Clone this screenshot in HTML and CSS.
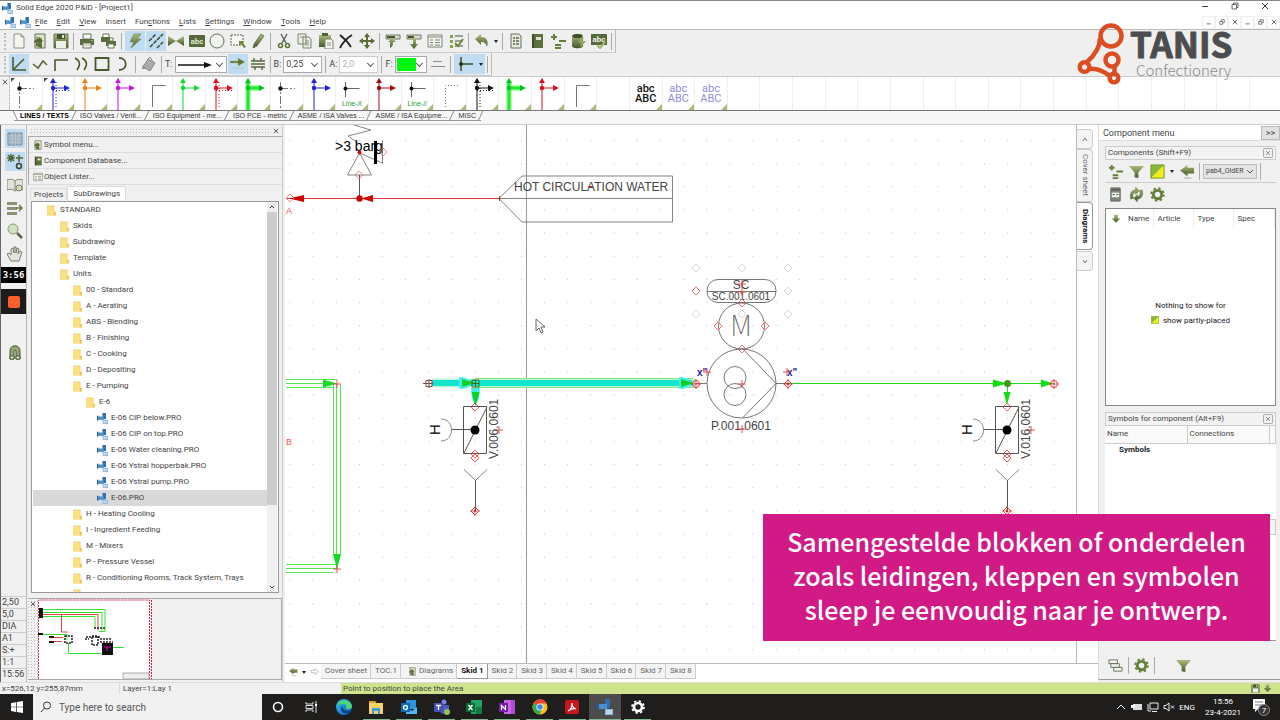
FILE: index.html
```html
<!DOCTYPE html>
<html lang="en">
<head>
<meta charset="utf-8">
<title>Solid Edge 2020 P&amp;ID - [Project1]</title>
<link rel="stylesheet" href="styles.css">
</head>
<body>
<svg class="defs" aria-hidden="true">
  <defs>
    <linearGradient id="olive" x1="0" y1="0" x2="0" y2="1"><stop offset="0" stop-color="#a9bd7c"/><stop offset="1" stop-color="#46582a"/></linearGradient>
    <linearGradient id="edgeg" x1="0" y1="0" x2="1" y2="1"><stop offset="0" stop-color="#35c6ee"/><stop offset="1" stop-color="#0a57b5"/></linearGradient>
    <g id="net"><path d="M10 1v31M10 10h13" stroke="currentColor"/><path d="M7 5l3-5 3 5zM21 7l6 3-6 3z" fill="currentColor"/><circle cx="10" cy="10" r="2.200" fill="currentColor"/></g>
  </defs>
  <symbol id="i-app" viewBox="0 0 16 16"><path d="M8 0h5v9H8z" fill="#2f6fae"/><path d="M2 5h8v5H2z" fill="#4a90cd"/><path d="M0 4h2v7H0z" fill="#245a92"/><path d="M8 10h8v6H8z" fill="#8db6dc"/><path d="M9 12h6M9 14h6" stroke="#e8f2fb"/></symbol>
  <symbol id="i-folder" viewBox="0 0 16 16"><path d="M2 1h10v9h2v5H2z" fill="#f9e083"/><path d="M2 1h10v9h2v5H2z" fill="none" stroke="#ecce66" stroke-width=".8"/><path d="M12 10h2v5h-2z" fill="#e9c04a"/></symbol>
  <symbol id="i-new" viewBox="0 0 16 16"><path d="M3 1h7l3 3v11H3z" fill="#f3f5ee" stroke="#8b9285"/><path d="M10 1v3h3" fill="none" stroke="#8b9285"/></symbol>
  <symbol id="i-open" viewBox="0 0 16 16"><path d="M3 1h10v14H3z" fill="#dfe5d2" stroke="#667052"/><path d="M4 3l6 2v10l-6-2z" fill="url(#olive)"/><path d="M2 10c0-3 2-4 5-4V4l4 4-4 3V9c-2 0-3 0-5 1z" fill="#56693a"/></symbol>
  <symbol id="i-save" viewBox="0 0 16 16"><path d="M1 1h14v14H1z" fill="url(#olive)" stroke="#6e7b5c"/><path d="M4 1h8v5H4z" fill="#44522f"/><path d="M9 2h2v3H9z" fill="#dde4cf"/><path d="M3 8h10v7H3z" fill="#eef1e8"/></symbol>
  <symbol id="i-print" viewBox="0 0 16 16"><path d="M4 1h8v5H4z" fill="#f7f8f3" stroke="#68725b"/><path d="M1 6h14v6H1z" fill="#5b6d3e"/><path d="M4 10h8v5H4z" fill="#f7f8f3" stroke="#68725b"/><path d="M5 12h6M12 7.500h2" stroke="#a7bd7b"/></symbol>
  <symbol id="i-print2" viewBox="0 0 16 16"><path d="M2 1h6v4H2zM7 5h5v3H7z" fill="#fff" stroke="#68725b"/><path d="M0 4h9v5H0zM5 8h10v5H5z" fill="#5b6d3e"/><path d="M7 11h6v4H7z" fill="#fff" stroke="#68725b"/></symbol>
  <symbol id="i-bolt" viewBox="0 0 16 16"><path d="M7 1h7l-4 5h4L4 15l3-6H3z" fill="url(#olive)" stroke="#6c8048" stroke-width=".6"/></symbol>
  <symbol id="i-hatch" viewBox="0 0 16 16"><path d="M1 8l7-7M2 14L15 1M9 15l6-6" stroke="#3e4b2b" stroke-width="1.500" stroke-dasharray="4 1" fill="none"/></symbol>
  <symbol id="i-valve" viewBox="0 0 16 16"><path d="M0 3l8 5-8 5zM16 3L8 8l8 5z" fill="url(#olive)"/></symbol>
  <symbol id="i-circle" viewBox="0 0 16 16"><circle cx="8" cy="8" r="7" fill="#f2f5ee" stroke="#64705a"/></symbol>
  <symbol id="i-select" viewBox="0 0 16 16"><path d="M1 2h12v10H1z" fill="#f8f9f5" stroke="#59664a" stroke-dasharray="2 1"/><path d="M9 8h5l-1 2 3 4-2 1-3-4-2 2z" fill="#6e8a3c"/></symbol>
  <symbol id="i-pencil" viewBox="0 0 16 16"><path d="M11 1l3 2-7 10-4 2 1-4z" fill="url(#olive)" stroke="#45552b" stroke-width=".6"/></symbol>
  <symbol id="i-cut" viewBox="0 0 16 16"><path d="M5 1l5 9M11 1L6 10" stroke="#5b655b" stroke-width="1.500"/><circle cx="4.500" cy="12.500" r="2" fill="none" stroke="#5c7237" stroke-width="1.500"/><circle cx="11.500" cy="12.500" r="2" fill="none" stroke="#5c7237" stroke-width="1.500"/></symbol>
  <symbol id="i-copy" viewBox="0 0 16 16"><path d="M1 1h8v10H1zM6 4h6l2 2v9H6z" fill="#e9ece1" stroke="#7b8570"/><path d="M3 4h4M8 8h4M8 10h4M8 12h4" stroke="#8f9a80"/></symbol>
  <symbol id="i-paste" viewBox="0 0 16 16"><path d="M1 2h12v12H1z" fill="url(#olive)"/><path d="M4 0h6v3H4z" fill="#526238"/><path d="M7 6h6l2 2v8H7z" fill="#f3f4ee" stroke="#7b8570"/><path d="M9 10h4M9 12h4" stroke="#8f9a80"/></symbol>
  <symbol id="i-x" viewBox="0 0 16 16"><path d="M2 2c5 4 8 7 11 12M14 2C9 5 5 9 2 15" stroke="#222" stroke-width="1.800" fill="none"/></symbol>
  <symbol id="i-move" viewBox="0 0 16 16"><path d="M8 0l3 4H9v3h3V5l4 3-4 3V9H9v3h2l-3 4-3-4h2V9H4v2L0 8l4-3v2h3V4H5z" fill="#5b7034"/></symbol>
  <symbol id="i-roller1" viewBox="0 0 16 16"><path d="M1 2h14v4H1z" fill="#d8dccb" stroke="#737b65"/><path d="M2 4h8" stroke="#49562f" stroke-width="2"/><path d="M5 15V9H3l4-4 4 4H8c0 3 0 4-3 6z" fill="url(#olive)"/></symbol>
  <symbol id="i-roller2" viewBox="0 0 16 16"><path d="M1 2h14v4H1z" fill="#d8dccb" stroke="#737b65"/><path d="M2 4h6" stroke="#49562f" stroke-width="2"/><path d="M7 5h3v6h2l-4 5-4-5h3z" fill="url(#olive)"/></symbol>
  <symbol id="i-list" viewBox="0 0 16 16"><path d="M1 2h14v12H1z" fill="#f4f6f1" stroke="#7c8674"/><path d="M1 4h14M3 7h3M3 9.500h3M3 12h3M8 7h5M8 9.500h5M8 12h5" stroke="#7c8674"/></symbol>
  <symbol id="i-check" viewBox="0 0 16 16"><path d="M2 2h3v3H2zM2 7h3v3H2zM2 12h3v3H2z" fill="#87a24c"/><path d="M7 3h8M7 8h8M7 13h8" stroke="#7c8674" stroke-width="1.500"/><path d="M7 10l3 3 5-7" stroke="#6a8638" stroke-width="1.800" fill="none"/></symbol>
  <symbol id="i-undo" viewBox="0 0 16 16"><path d="M1 6l6-5v3c5 0 8 3 6 10-1-4-3-5-6-5v3z" fill="url(#olive)"/></symbol>
  <symbol id="i-report" viewBox="0 0 16 16"><path d="M3 1h8l2 2v12H3z" fill="#e7eade" stroke="#65705a"/><path d="M5 5h2M8 5h3M5 8h2M8 8h3M5 11h2M8 11h3" stroke="#5c6a45" stroke-width="1.500"/></symbol>
  <symbol id="i-book" viewBox="0 0 16 16"><path d="M3 1h11v14H3z" fill="#5d7040"/><path d="M3 1h2v14H3z" fill="#3e4c28"/><path d="M7 4h5v3H7z" fill="#dfe6d0"/></symbol>
  <symbol id="i-plusminus" viewBox="0 0 16 16"><path d="M4 1v6M1 4h6M9 8h7M5 12h6M5 15h6" stroke="#66803b" stroke-width="2"/></symbol>
  <symbol id="i-db" viewBox="0 0 16 16"><path d="M2 3c0-3 11-3 11 0v10c0 3-11 3-11 0z" fill="url(#olive)"/><ellipse cx="7.500" cy="3" rx="5" ry="2" fill="#3e4c28"/><path d="M10 5h4l-2 3h4l-6 7 1-5H9z" fill="#8ea861"/></symbol>
  <symbol id="i-axis" viewBox="0 0 16 16"><path d="M2 1v13h13M3 13L13 3" stroke="#4a5a30" stroke-width="1.600" fill="none"/></symbol>
  <symbol id="i-zig" viewBox="0 0 16 16"><path d="M1 8l5 4 5-7 4 4" stroke="#56673a" stroke-width="1.600" fill="none"/></symbol>
  <symbol id="i-corner" viewBox="0 0 16 16"><path d="M2 15V4h13" stroke="#4a5a30" stroke-width="1.600" fill="none"/></symbol>
  <symbol id="i-waves" viewBox="0 0 16 16"><path d="M2 2c5 3 6 6 2 12M9 2c5 3 6 6 2 12" stroke="#4a5a30" stroke-width="1.600" fill="none"/></symbol>
  <symbol id="i-square" viewBox="0 0 16 16"><path d="M1.500 2h13v12h-13z" stroke="#4a5a30" stroke-width="1.800" fill="none"/></symbol>
  <symbol id="i-arc" viewBox="0 0 16 16"><path d="M4 2c9 0 9 12 0 12" stroke="#4a5a30" stroke-width="1.800" fill="none"/></symbol>
  <symbol id="i-bucket" viewBox="0 0 16 16"><path d="M7 3l7 4-5 8-7-4z" fill="#a9aca7" stroke="#888b86"/><path d="M7 3l2-2 3 5" fill="none" stroke="#888b86"/><path d="M2 8l-1 5h3z" fill="#8b8e89"/></symbol>
  <symbol id="i-arrow" viewBox="0 0 16 16"><path d="M0 5h8V2l7 4-7 4V7H0zM2 12h12" fill="#5c7237" stroke="#a9bd8a" stroke-width=".5"/></symbol>
  <symbol id="i-multi" viewBox="0 0 16 16"><path d="M1 5h14M1 8h14M1 11h14M4 2v3M11 2v3M5 11v3M12 11v3" stroke="#56673a" stroke-width="1.400"/></symbol>
  <symbol id="i-tee" viewBox="0 0 16 16"><path d="M4 1v14M4 8h12" stroke="#3f4f2c" stroke-width="1.500"/><circle cx="4" cy="8" r="2" fill="#2c3820"/></symbol>
  <symbol id="i-grid" viewBox="0 0 16 16"><path d="M1 2h14v12H1z" fill="#9eb2c0" stroke="#7a8b99"/><path d="M1 5h14M1 8h14M1 11h14M5 2v12M8.500 2v12M12 2v12" stroke="#b9c8d3"/></symbol>
  <symbol id="i-snap" viewBox="0 0 16 16"><path d="M4 0v8M0 4h8M1 1l6 6M7 1L1 7M12 1v7M9 4h7" stroke="#516432" stroke-width="1.500"/><circle cx="12" cy="12" r="2.500" fill="none" stroke="#39462a" stroke-width="1.500"/></symbol>
  <symbol id="i-readbook" viewBox="0 0 16 16"><path d="M0 3c3-1 6-1 8 1 2-2 5-2 8-1v10c-3-1-6-1-8 1-2-2-5-2-8-1z" fill="#dfe3d9" stroke="#7d8674"/><path d="M8 4v9" stroke="#7d8674"/><circle cx="12" cy="11" r="3" fill="#cdd8b6" stroke="#7d8674"/></symbol>
  <symbol id="i-lines" viewBox="0 0 16 16"><path d="M0 2h10v3H0zM0 7h10v3H0zM0 12h10v3H0z" fill="#8a9278"/><path d="M8 8h6M12 5l3 3-3 3" stroke="#66803b" fill="none" stroke-width="1.500"/></symbol>
  <symbol id="i-mag" viewBox="0 0 16 16"><circle cx="6" cy="6" r="5" fill="#cfe3c0" stroke="#8c9683"/><path d="M10 10l5 5" stroke="#596350" stroke-width="2.500"/></symbol>
  <symbol id="i-hand" viewBox="0 0 16 16"><path d="M4 15L0 8l2-1 2 2V3l2-1 1 5V1h2v6l1-5 2 1-1 5 2-3 2 1-3 9z" fill="#e2e5dd" stroke="#757e6d"/></symbol>
  <symbol id="i-magnet" viewBox="0 0 16 16"><path d="M3 15V7c0-7 10-7 10 0v8H9V7c0-1-2-1-2 0v8z" fill="#96a678" stroke="#47552f"/><path d="M3 12h4v3H3zM9 12h4v3H9z" fill="#e8ece0" stroke="#47552f"/></symbol>
  <symbol id="i-funnel" viewBox="0 0 16 16"><path d="M0 2h16l-6 7v6l-4-1V9z" fill="url(#olive)"/></symbol>
  <symbol id="i-yellow" viewBox="0 0 16 16"><path d="M1 1h14v14H1z" fill="#f4ee1d"/><path d="M1 1h14L1 15z" fill="#86bb3a"/><path d="M1 1h14v14H1z" fill="none" stroke="#748f2e"/></symbol>
  <symbol id="i-left" viewBox="0 0 16 16"><path d="M0 7l8-6v3h7v6H8v3z" fill="url(#olive)"/><path d="M4 15h8" stroke="#a7aba2"/></symbol>
  <symbol id="i-down" viewBox="0 0 16 16"><path d="M5 1h6v6h4l-7 7-7-7h4z" fill="url(#olive)"/></symbol>
  <symbol id="i-cab" viewBox="0 0 16 16"><path d="M3 1h10v14H3z" fill="#7e857a" stroke="#5c6359"/><path d="M4 6h8v5H4z" fill="#eef0ea"/><path d="M5 8h2M9 8h2M4 3h8" stroke="#444"/></symbol>
  <symbol id="i-refresh" viewBox="0 0 16 16"><path d="M2 13C0 7 3 3 7 3V0l4 4-4 4V6C5 6 3 8 5 12zM14 3c2 6-1 10-5 10v3l-4-4 4-4v2c2 0 4-2 2-6z" fill="url(#olive)" stroke="#53663a" stroke-width=".4"/></symbol>
  <symbol id="i-gear" viewBox="0 0 16 16"><circle cx="8" cy="8" r="4.500" fill="none" stroke="currentColor" stroke-width="3"/><circle cx="8" cy="8" r="6.700" fill="none" stroke="currentColor" stroke-width="2" stroke-dasharray="2.600 2.660"/></symbol>
  <symbol id="i-stack" viewBox="0 0 16 16"><path d="M1 2h9v4H1zM3 6h9v4H3zM6 10h9v4H6z" fill="#f0f3ee" stroke="#69745f"/></symbol>
  <symbol id="i-net" viewBox="0 0 33 32"><use href="#net"/></symbol>
  <symbol id="i-netd" viewBox="0 0 33 32"><path d="M13 4v27M10 12.500h16" stroke="currentColor" stroke-dasharray="1 2" fill="none"/><use href="#net"/></symbol>
  <symbol id="i-dash" viewBox="0 0 33 32"><path d="M9.500 4v27" stroke="#777" stroke-dasharray="8 2 2 2"/><path d="M10 10.500h14" stroke="#777" stroke-dasharray="7 2 2 2"/><circle cx="9.500" cy="10.500" r="2.200" fill="#111"/></symbol>
  <symbol id="i-wide" viewBox="0 0 33 32"><path d="M10 5v27M10 10h13" stroke="#5cf85c" stroke-width="5"/><g color="#00c41c"><use href="#net"/></g></symbol>
  <symbol id="i-elbow" viewBox="0 0 33 32"><path d="M11.500 29V7.500h13" stroke="currentColor" fill="none"/></symbol>
  <symbol id="i-cross" viewBox="0 0 33 32"><path d="M9.500 4v15M9.500 10.500h14" stroke="#666"/><circle cx="9.500" cy="10.500" r="2" fill="#111"/></symbol>
  <symbol id="i-close" viewBox="0 0 8 8"><path d="M1 1l6 6M7 1L1 7" stroke="#333"/></symbol>
  <symbol id="i-min" viewBox="0 0 8 8"><path d="M1 6.500h5" stroke="#444"/></symbol>
  <symbol id="i-rest" viewBox="0 0 8 8"><path d="M1 3.500h4V7H1zM3 3.500V1h4v4H5.500" fill="none" stroke="#444" stroke-width=".9"/></symbol>
  <symbol id="i-boxx" viewBox="0 0 10 10"><rect x=".5" y=".5" width="9" height="9" rx="1" fill="#eee" stroke="#999" stroke-width=".8"/><path d="M3 3l4 4M7 3L3 7" stroke="#999"/></symbol>
  <symbol id="m-dia" viewBox="-6 -6 12 12"><path d="M-4 0L0-4 4 0 0 4z" fill="none" stroke="currentColor" stroke-width=".8"/></symbol>
  <symbol id="m-plus" viewBox="-6 -6 12 12"><path d="M-4 0h8M0-4v8" stroke="#e84040" stroke-width=".9"/></symbol>
  <symbol id="m-end" viewBox="-6 -6 12 12"><path d="M-4 0L0-4 4 0 0 4z" fill="none" stroke="#e23b3b"/><path d="M-5 0H5M0-5V5" stroke="#e23b3b" stroke-width=".7"/><circle r="1" fill="#a11"/></symbol>
  <symbol id="m-port" viewBox="-6 -6 12 12"><circle r="3.500" fill="none" stroke="#e23b3b"/><path d="M-5 0H5M0-5V5" stroke="#e23b3b" stroke-width=".8"/></symbol>
</svg>

<header class="titlebar">
  <svg class="ic10"><use href="#i-app"/></svg>
  <h1>Solid Edge 2020 P&amp;ID - [Project1]</h1>
  <div class="winbtns">
    <button aria-label="Minimise"><svg viewBox="0 0 8 8"><path d="M1 4.500h6" stroke="#444"/></svg></button>
    <button aria-label="Restore"><svg viewBox="0 0 8 8"><path d="M1 2.500h4.500V7H1zM2.500 2.500V1H7v4.500H5.500" fill="none" stroke="#444" stroke-width=".8"/></svg></button>
    <button aria-label="Close"><svg><use href="#i-close"/></svg></button>
  </div>
</header>

<nav class="menubar" aria-label="Main menu">
  <svg class="ic10"><use href="#i-app"/></svg><svg class="ic10"><use href="#i-app"/></svg>
  <button><u>F</u>ile</button><button><u>E</u>dit</button><button><u>V</u>iew</button><button>Insert</button><button>Fun<u>c</u>tions</button><button><u>L</u>ists</button><button><u>S</u>ettings</button><button><u>W</u>indow</button><button><u>T</u>ools</button><button><u>H</u>elp</button>
  <div class="mdi"><button aria-label="Minimise sheet"><svg><use href="#i-min"/></svg></button><button aria-label="Restore sheet"><svg><use href="#i-rest"/></svg></button><button aria-label="Close sheet"><svg><use href="#i-close"/></svg></button><button aria-label="Minimise project"><svg><use href="#i-min"/></svg></button><button aria-label="Restore project"><svg><use href="#i-rest"/></svg></button><button aria-label="Close project"><svg><use href="#i-close"/></svg></button></div>
</nav>

<div class="toolbars">
  <div class="toolbar">
    <i class="grip"></i>
    <div class="grp w62"><button aria-label="New"><svg><use href="#i-new"/></svg></button><button aria-label="Open"><svg><use href="#i-open"/></svg></button><button aria-label="Save"><svg><use href="#i-save"/></svg></button></div><i class="sep"></i>
    <div class="grp w42"><button aria-label="Print"><svg><use href="#i-print"/></svg></button><button aria-label="Batch print"><svg><use href="#i-print2"/></svg></button></div><i class="sep"></i>
    <div class="grp w143"><button class="on" aria-label="Quick"><svg><use href="#i-bolt"/></svg></button><button class="on" aria-label="Hatch"><svg><use href="#i-hatch"/></svg></button><button aria-label="Symbol"><svg><use href="#i-valve"/></svg></button><button aria-label="Text"><svg viewBox="0 0 16 16"><rect y="2" width="16" height="12" rx="1" fill="#56693c"/><text x="8" y="11" font-size="8" text-anchor="middle" font-weight="700" fill="#dfe8ce">abc</text></svg></button><button aria-label="Circle"><svg><use href="#i-circle"/></svg></button><button aria-label="Area"><svg><use href="#i-select"/></svg></button><button aria-label="Draw"><svg><use href="#i-pencil"/></svg></button></div><i class="sep"></i>
    <div class="grp w103"><button aria-label="Cut"><svg><use href="#i-cut"/></svg></button><button aria-label="Copy"><svg><use href="#i-copy"/></svg></button><button aria-label="Paste"><svg><use href="#i-paste"/></svg></button><button aria-label="Delete"><svg><use href="#i-x"/></svg></button><button aria-label="Move"><svg><use href="#i-move"/></svg></button></div><i class="sep"></i>
    <div class="grp w83"><button aria-label="Pick up"><svg><use href="#i-roller1"/></svg></button><button aria-label="Put down"><svg><use href="#i-roller2"/></svg></button><button aria-label="Data"><svg><use href="#i-list"/></svg></button><button aria-label="Check list"><svg><use href="#i-check"/></svg></button></div><i class="sep"></i>
    <div class="grp w28"><button aria-label="Undo"><svg><use href="#i-undo"/></svg></button><i class="caret"></i></div><i class="sep"></i>
    <div class="grp w103"><button aria-label="Report"><svg><use href="#i-report"/></svg></button><button aria-label="Catalogue"><svg><use href="#i-book"/></svg></button><button aria-label="Components"><svg><use href="#i-plusminus"/></svg></button><button aria-label="Database"><svg><use href="#i-db"/></svg></button><button aria-label="Spelling"><svg viewBox="0 0 16 16"><path d="M0 1h16v11H0z" fill="#56693c"/><text x="8" y="9" font-size="8" text-anchor="middle" font-weight="700" fill="#eef3e4">abc</text><path d="M6 12l3 3 5-6" stroke="#9db56c" stroke-width="2" fill="none"/></svg></button></div><i class="sep"></i>
  </div>
  <div class="toolbar">
    <i class="grip"></i>
    <div class="grp w124"><button class="on" aria-label="Straight"><svg><use href="#i-axis"/></svg></button><button aria-label="Polyline"><svg><use href="#i-zig"/></svg></button><button aria-label="Corner"><svg><use href="#i-corner"/></svg></button><button aria-label="Curve"><svg><use href="#i-waves"/></svg></button><button aria-label="Rectangle"><svg><use href="#i-square"/></svg></button><button aria-label="Arc"><svg><use href="#i-arc"/></svg></button></div><i class="sep"></i>
    <button aria-label="Fill"><svg><use href="#i-bucket"/></svg></button><i class="sep"></i>
    <label for="lt">T:</label>
    <span class="combo w52"><select id="lt"><option></option></select><svg class="linetype" viewBox="0 0 34 8"><path d="M0 4h30" stroke="#111" stroke-width="1.500"/><path d="M26 1l8 3-8 3z" fill="#111"/></svg></span>
    <button class="on" aria-label="Arrow"><svg><use href="#i-arrow"/></svg></button><button aria-label="Multi line"><svg><use href="#i-multi"/></svg></button><i class="sep"></i>
    <label for="lb">B:</label><span class="combo w39"><select id="lb"><option>0,25</option></select></span><i class="sep"></i>
    <label for="la">A:</label><span class="combo w39 off"><select id="la" disabled><option>2,0</option></select></span><i class="sep"></i>
    <label for="lf">F:</label><span class="combo w32"><select id="lf"><option></option></select><i class="swatch"></i></span>
    <button aria-label="Spacing"><svg viewBox="0 0 16 16"><path d="M3 5.500h9M1 10.500h14" stroke="#8b8f88"/></svg></button><i class="sep"></i>
    <button class="on wide" aria-label="Junction"><svg><use href="#i-tee"/></svg><i class="caret"></i></button><i class="sep"></i>
  </div>
</div>

<section class="palette" aria-label="Lines and texts">
  <i class="pgrip"><svg><use href="#i-close"/></svg></i>
  <div class="cells">
    <button class="c first"><svg><use href="#i-dash"/></svg></button>
    <button class="c first blue"><svg><use href="#i-netd"/></svg></button>
    <button class="c orange"><svg><use href="#i-net"/></svg></button>
    <button class="c magenta"><svg><use href="#i-net"/></svg></button>
    <button class="c grey"><svg><use href="#i-elbow"/></svg></button>
    <button class="c green"><svg><use href="#i-net"/></svg></button>
    <button class="c red"><svg><use href="#i-netd"/></svg></button>
    <button class="c"><svg><use href="#i-wide"/></svg></button>
    <button class="c"><svg><use href="#i-dash"/></svg></button>
    <button class="c blue"><svg><use href="#i-net"/></svg></button>
    <button class="c"><svg><use href="#i-cross"/></svg><span>Line-X</span></button>
    <button class="c darkred"><svg><use href="#i-net"/></svg></button>
    <button class="c"><svg><use href="#i-cross"/></svg><span>Line-//</span></button>
    <button class="c grey dotted"><svg><use href="#i-elbow"/></svg></button>
    <button class="c black"><svg><use href="#i-netd"/></svg></button>
    <button class="c"><svg><use href="#i-wide"/></svg></button>
    <button class="c red"><svg><use href="#i-net"/></svg></button>
    <button class="c grey"><svg><use href="#i-elbow"/></svg></button>
    <b></b>
    <button class="c abc strong">abc<br>ABC</button>
    <button class="c abc">abc<br>ABC</button>
    <button class="c abc">abc<br>ABC</button>
    <b></b><b></b><b></b><b></b><b></b><b></b><b></b><b></b><b></b><b></b><b></b><b></b><b></b><b></b><b></b><b></b><b></b>
  </div>
</section>
<nav class="ptabs" aria-label="Symbol pages"><button class="sel">LINES / TEXTS</button><button>ISO Valves / Venti...</button><button>ISO Equipment - me...</button><button>ISO PCE - metric</button><button>ASME / ISA Valves ...</button><button>ASME / ISA Equipme...</button><button>MISC</button></nav>

<main class="work">
  <aside class="strip">
    <button class="on" aria-label="Grid"><svg><use href="#i-grid"/></svg></button>
    <button class="on" aria-label="Snap"><svg><use href="#i-snap"/></svg></button>
    <button aria-label="Info"><svg><use href="#i-readbook"/></svg></button>
    <button aria-label="Layers"><svg><use href="#i-lines"/></svg></button>
    <button aria-label="Zoom"><svg><use href="#i-mag"/></svg></button>
    <button aria-label="Pan"><svg><use href="#i-hand"/></svg></button>
    <time class="rectime">3:56</time>
    <div class="rec"><i></i></div>
    <button class="mag" aria-label="Magnet"><svg><use href="#i-magnet"/></svg></button>
    <ul><li>2,50</li><li>5,0</li><li>DIA</li><li>A1</li><li>S:+</li><li>1:1</li><li>15:56</li></ul>
  </aside>

  <section class="explorer">
    <div class="dockbar"><i></i><button aria-label="Close panel"><svg><use href="#i-close"/></svg></button></div>
    <div class="links">
      <button><svg><use href="#i-open"/></svg>Symbol menu...</button>
      <button><svg><use href="#i-book"/></svg>Component Database...</button>
      <button><svg><use href="#i-list"/></svg>Object Lister...</button>
    </div>
    <div class="etabs"><button>Projects</button><button class="sel">SubDrawings</button></div>
    <div class="treebox">
      <ul class="tree">
        <li class="l0"><svg><use href="#i-folder"/></svg>STANDARD</li>
        <li class="l1"><svg><use href="#i-folder"/></svg>Skids</li>
        <li class="l1"><svg><use href="#i-folder"/></svg>Subdrawing</li>
        <li class="l1"><svg><use href="#i-folder"/></svg>Template</li>
        <li class="l1"><svg><use href="#i-folder"/></svg>Units</li>
        <li class="l2"><svg><use href="#i-folder"/></svg>00 - Standard</li>
        <li class="l2"><svg><use href="#i-folder"/></svg>A - Aerating</li>
        <li class="l2"><svg><use href="#i-folder"/></svg>ABS - Blending</li>
        <li class="l2"><svg><use href="#i-folder"/></svg>B - Finishing</li>
        <li class="l2"><svg><use href="#i-folder"/></svg>C - Cooking</li>
        <li class="l2"><svg><use href="#i-folder"/></svg>D - Depositing</li>
        <li class="l2"><svg><use href="#i-folder"/></svg>E - Pumping</li>
        <li class="l3"><svg><use href="#i-folder"/></svg>E-6</li>
        <li class="l4"><svg><use href="#i-app"/></svg>E-06 CIP below.PRO</li>
        <li class="l4"><svg><use href="#i-app"/></svg>E-06 CIP on top.PRO</li>
        <li class="l4"><svg><use href="#i-app"/></svg>E-06 Water cleaning.PRO</li>
        <li class="l4"><svg><use href="#i-app"/></svg>E-06 Ystral hopperbak.PRO</li>
        <li class="l4"><svg><use href="#i-app"/></svg>E-06 Ystral pump.PRO</li>
        <li class="l4 sel"><svg><use href="#i-app"/></svg>E-06.PRO</li>
        <li class="l2"><svg><use href="#i-folder"/></svg>H - Heating Cooling</li>
        <li class="l2"><svg><use href="#i-folder"/></svg>I - Ingredient Feeding</li>
        <li class="l2"><svg><use href="#i-folder"/></svg>M - Mixers</li>
        <li class="l2"><svg><use href="#i-folder"/></svg>P - Pressure Vessel</li>
        <li class="l2"><svg><use href="#i-folder"/></svg>R - Conditioning Rooms, Track System, Trays</li>
        <li class="l2"><svg><use href="#i-folder"/></svg></li>
      </ul>
      <div class="scroll"><svg viewBox="0 0 10 10"><path d="M3 6l2-2 2 2" fill="none" stroke="#333"/></svg><i></i><svg viewBox="0 0 10 10"><path d="M3 4l2 2 2-2" fill="none" stroke="#333"/></svg></div>
    </div>
    <div class="preview">
      <i class="pgrip"><svg><use href="#i-close"/></svg></i>
      <svg class="mini" viewBox="39 600 115 80">
        <path d="M39 600h112v80H39z" fill="#fff"/><path d="M39.500 680v-79h111v79M152.500 601v79" fill="none" stroke="#c24" stroke-dasharray="2 1"/>
        <path d="M44 610.500h62v22h-6M44 613.500h59v18M44 617.500h52v12M44 635.500h24v5M69.500 644v10.500h33M107 648.500h18" stroke="#35e035" fill="none"/>
        <path d="M44 615.500h55v16M62.500 616v17h6M55 638.500h9M55 642.500h8" stroke="#e04545" fill="none"/>
        <path d="M40 609h4v10h-4zM39 634h5v2h-5zM50 637h5v2h-5zM50 642h5v2h-5zM103 644h11v12h-11z" fill="#111"/>
        <path d="M66 637h7v7h-7zM93 637h6v9h-6zM87 638h15M101 640h12M101 643h13M86 640h4M95 629h12" stroke="#222" stroke-width="1.500" stroke-dasharray="2 1" fill="none"/>
        <path d="M105 648h7M108 648v4" stroke="#d0c"/><path d="M124 674h26v6h-26z" fill="#eee" stroke="#aaa"/>
      </svg>
    </div>
  </section>

  <section class="center">
    <div class="sheetrow">
      <svg class="sheet" role="img" aria-label="Skid 1 diagram">
        <defs><pattern id="dots" width="23.150" height="23.150" patternUnits="userSpaceOnUse" x="289.500" y="140"><rect width="1" height="1" fill="#bbb"/></pattern></defs>
        <g transform="translate(-285 -125)">
          <rect x="285" y="125" width="1600" height="1200" fill="url(#dots)"/>
          <path d="M526.500 125v638" stroke="#999"/>
          <g fill="none" stroke="#777" stroke-width=".9">
            <path d="M354 125l17 5-23 6 10 7"/><path d="M359.500 153l-12 22h24zM359.500 153l23 10v-22"/><path d="M359.500 175v23" stroke="#444"/>
            <path d="M499 198.500l23-22.500h150.500v46H522z M499 198.500h173"/>
          </g>
          <text x="335" y="151" font-size="14">&gt;3 barg</text>
          <path d="M375.500 141v23" stroke="#000" stroke-width="3"/>
          <path d="M286 198.500h213" stroke="#e23030"/>
          <path d="M289 198.500l15-3.500v7zM361 198.500l12-3.500v7z" fill="#d00000"/><circle cx="359.500" cy="198.500" r="3.200" fill="#c80000"/><circle cx="359.500" cy="152.500" r="2" fill="#c11"/>
          <g color="#ef6a6a"><use href="#m-dia" x="353" y="169" width="12" height="12"/><use href="#m-dia" x="377" y="146" width="12" height="12"/><use href="#m-dia" x="284" y="192" width="12" height="12"/></g>
          <text x="514" y="191" class="cad">HOT CIRCULATION WATER</text>
          <path d="M588 186.500h5M499.500 196v5M497 198.500h4" stroke="#c33"/>
          <text x="286" y="214" font-size="9" fill="#e55">A</text><text x="286" y="445" font-size="9" fill="#e55">B</text>

          <g stroke="#4fe94f" fill="none"><path d="M286 379.500h51M286 383.500h50M286 387.500h47M336.500 384v184M340.500 384v170M286 564.500h51M286 568.500h51M286 572.500h47M333.500 384v170"/></g>
          <path d="M323 379.500l14 4-14 4zM333 554h8l-4 15z" fill="#10dc20"/>
          <use href="#m-plus" x="331" y="378" width="12" height="12"/><use href="#m-plus" x="331" y="563" width="12" height="12"/>

          <path d="M432 383h264" stroke="#bff5d2" stroke-width="9"/>
          <path d="M432 383h260" stroke="#12e5cf" stroke-width="6"/><path d="M475 378.500h218M475 387.500h218" stroke="#7bea7b"/>
          <path d="M459 377.500c6-1 9 2 14 5.500-5 4-8 7-14 5.500zM679 377.500c6-1 9 2 14 5.500-5 4-8 7-14 5.500zM471 388h9l-1 10-3.500 8-3.500-8z" fill="#3df0f0"/>
          <path d="M462 379l13 4-13 4zM681 379l13 4-13 4zM471.500 392h8l-4 14z" fill="#10cf20"/>
          <path d="M426 380.500h6v6h-6zM423 383.500h10M429 379v9" stroke="#844" fill="none"/><path d="M472 380h7v7h-7zM475.500 380v7M472 383.500h7" stroke="#4a6410" fill="none"/>

          <g id="valve">
            <g fill="none" stroke="#555"><path d="M463.500 406.500h23v47h-23zM464 453l23-46M452 429.500h23"/><path d="M441 419c14 0 14 22 0 22" stroke="#888"/><path d="M464 469.500l11.500 11 11.500-11" stroke="#888"/><path d="M475.500 480v30"/></g>
            <circle cx="475" cy="430" r="4.500"/>
            <g color="#e33"><use href="#m-dia" x="469" y="401" width="12" height="12"/><use href="#m-dia" x="469" y="448" width="12" height="12"/><use href="#m-dia" x="469" y="452" width="12" height="12"/></g>
            <use href="#m-end" x="469" y="505" width="12" height="12"/><use href="#m-plus" x="493" y="424" width="12" height="12"/>
            <text transform="translate(440 435) rotate(-90)" font-size="15">H</text>
          </g>
          <text transform="translate(498 459) rotate(-90)" class="cad">V.006.0601</text>
          <use href="#valve" x="532"/>
          <text transform="translate(1030 459) rotate(-90)" class="cad">V.016.0601</text>

          <path d="M788 383.500h266M1007.500 383v14" stroke="#1fd91f"/>
          <path d="M993 379.500l14 4-14 4zM1041 379.500l12 4-12 4zM1003.500 392h7l-3.500 13z" fill="#10e010"/><circle cx="1007.500" cy="383.500" r="3.500" fill="#3b9a10"/>
          <g fill="none" stroke="#666" stroke-width=".9">
            <rect x="707" y="279.500" width="69" height="23" rx="11"/><path d="M707 291.500h69"/>
            <circle cx="741.500" cy="326" r="23"/><circle cx="741.500" cy="383.500" r="34.500"/><path d="M743 349l33 34.500-33 34M776 383.500h11M695 383.500h12"/>
            <circle cx="735" cy="377.500" r="11"/><circle cx="735" cy="394.500" r="11"/>
          </g>
          <text x="741" y="289" text-anchor="middle" class="cad">SC</text><text x="741" y="300" text-anchor="middle" class="cad10">SC.001.0601</text>
          <text x="741" y="336" text-anchor="middle" class="motor">M</text>
          <text x="741" y="430" text-anchor="middle" class="cad">P.001.0601</text>
          <g fill="#1a1aa8" font-size="10" font-weight="700"><text x="697" y="376">x"</text><text x="787" y="376">x"</text></g>
          <g color="#ccc"><use href="#m-dia" x="690" y="262" width="12" height="12"/><use href="#m-dia" x="736" y="262" width="12" height="12"/><use href="#m-dia" x="782" y="262" width="12" height="12"/><use href="#m-dia" x="782" y="285" width="12" height="12"/><use href="#m-dia" x="690" y="308" width="12" height="12"/><use href="#m-dia" x="736" y="308" width="12" height="12"/><use href="#m-dia" x="782" y="308" width="12" height="12"/></g>
          <g color="#e95050"><use href="#m-dia" x="690" y="285" width="12" height="12"/><use href="#m-dia" x="712" y="320" width="12" height="12"/><use href="#m-dia" x="759" y="320" width="12" height="12"/><use href="#m-dia" x="736" y="343" width="12" height="12"/><use href="#m-dia" x="736" y="297" width="12" height="12"/></g>
          <use href="#m-port" x="690" y="378" width="12" height="12"/><use href="#m-end" x="782" y="378" width="12" height="12"/><use href="#m-port" x="1048" y="378" width="12" height="12"/>
          <g><use href="#m-plus" x="736" y="278" width="12" height="12"/><use href="#m-plus" x="736" y="286" width="12" height="12"/><use href="#m-plus" x="736" y="378" width="12" height="12"/><use href="#m-plus" x="736" y="423" width="12" height="12"/><use href="#m-plus" x="701" y="366" width="12" height="12"/><use href="#m-plus" x="781" y="366" width="12" height="12"/></g>
          <path d="M536 319v12l3-3 2 5 2-1-2-5h4z" fill="#fff" stroke="#555" stroke-width=".9"/>
        </g>
      </svg>
      <nav class="vtabs"><button class="sm" aria-label="Previous"><svg viewBox="0 0 8 8"><path d="M2 6l2-3 2 3" fill="none" stroke="#777"/></svg></button><button>Cover sheet</button><button class="sel">Diagrams</button><button class="sm" aria-label="Next"><svg viewBox="0 0 8 8"><path d="M2 3l2 3 2-3" fill="none" stroke="#777"/></svg></button></nav>
    </div>
    <nav class="sheets"><button class="nav" aria-label="Back"><svg><use href="#i-left"/></svg></button><i class="caret"></i><button class="nav" aria-label="Forward"><svg viewBox="0 0 16 16"><path d="M2 6h7V3l6 5-6 5v-3H2z" fill="#fff" stroke="#999"/></svg></button><button>Cover sheet</button><button>TOC.1</button><button><svg><use href="#i-open"/></svg>Diagrams</button><button class="sel">Skid 1</button><button>Skid 2</button><button>Skid 3</button><button>Skid 4</button><button>Skid 5</button><button>Skid 6</button><button>Skid 7</button><button>Skid 8</button></nav>
  </section>

  <aside class="comp">
    <div class="comptitle"><h2>Component menu</h2><button>&gt;&gt;</button></div>
    <div class="compbody">
      <div class="phead">Components (Shift+F9)<button aria-label="Close"><svg><use href="#i-boxx"/></svg></button></div>
      <div class="crow"><button aria-label="Add"><svg><use href="#i-plusminus"/></svg></button><button aria-label="Filter"><svg><use href="#i-funnel"/></svg></button><button aria-label="Colour"><svg><use href="#i-yellow"/></svg></button><i class="caret"></i><button aria-label="Back"><svg><use href="#i-left"/></svg></button><i class="sep"></i><select aria-label="Component set"><option>pab4_OldER</option></select><i class="sep"></i></div>
      <div class="crow"><button aria-label="Cabinet"><svg><use href="#i-cab"/></svg></button><button aria-label="Refresh"><svg><use href="#i-refresh"/></svg></button><button class="olive" aria-label="Options"><svg><use href="#i-gear"/></svg></button></div>
      <div class="ctable">
        <table><thead><tr><th class="k"><svg><use href="#i-down"/></svg></th><th class="n">Name</th><th class="a">Article</th><th class="a">Type</th><th>Spec</th></tr></thead></table>
        <p>Nothing to show for<br><svg><use href="#i-yellow"/></svg>show partly-placed</p>
      </div>
      <div class="phead sy">Symbols for component (Alt+F9)<button aria-label="Close"><svg><use href="#i-boxx"/></svg></button></div>
      <table class="stable"><thead><tr><th>Name</th><th>Connections</th><th></th></tr></thead><tbody><tr><td colspan="3">Symbols</td></tr></tbody></table>
      <div class="phead low"></div>
      <div class="blank"></div>
      <div class="cfoot"><button aria-label="Windows"><svg><use href="#i-stack"/></svg></button><i class="sep"></i><button class="olive" aria-label="Options"><svg><use href="#i-gear"/></svg></button><i class="sep"></i><button class="fn" aria-label="Filter"><svg><use href="#i-funnel"/></svg></button></div>
    </div>
  </aside>
</main>

<div class="status"><span class="pos">x=526,12 y=255,87mm</span><span class="layer">Layer=1:Lay 1</span><span class="hint">Point to position to place the Area<svg><use href="#i-save"/></svg><svg><use href="#i-down"/></svg></span></div>

<footer class="taskbar">
  <button class="start" aria-label="Start"><svg viewBox="0 0 12 12"><path d="M0 2l5-.8V5.700H0zM5.700 1L12 0v5.700H5.700zM0 6.300h5v4.600L0 10zM5.700 6.300H12V12l-6.300-1z" fill="#fff"/></svg></button>
  <label class="search"><svg viewBox="0 0 12 12"><circle cx="7" cy="4.500" r="3.500" fill="none" stroke="#333"/><path d="M4.500 7L1 11" stroke="#333"/></svg><input type="text" placeholder="Type here to search" aria-label="Type here to search"></label>
  <div class="apps">
    <button aria-label="Cortana"><svg viewBox="0 0 16 16"><circle cx="8" cy="8" r="4.500" fill="none" stroke="#fff" stroke-width="1.600"/></svg></button>
    <button aria-label="Task view"><svg viewBox="0 0 16 16"><path d="M3 3v2h7V3M3 13v-2h7v2M3 6.500h7v3H3zM13 2v12" fill="none" stroke="#ddd"/><path d="M12 5h2v2h-2z" fill="#fff"/></svg></button>
    <button aria-label="Edge"><svg viewBox="0 0 16 16"><circle cx="8" cy="8" r="8" fill="url(#edgeg)"/><path d="M1 6C4 0 14 0 16 7c0 4-5 4-6 2 1-2 0-4-3-4-2 0-5 1-6 1z" fill="#4fd67a"/><path d="M6 7c-3 4 1 9 7 7 1-1 2-2 2-3-3 2-8 1-9-4z" fill="#0c3f8d"/></svg></button>
    <button class="run" aria-label="Explorer"><svg viewBox="0 0 16 16"><path d="M1 2h6l1 2h7v11H1z" fill="#f9d262"/><path d="M1 2h6l1 2H1z" fill="#e2a12e"/><path d="M4 15V9h8v6h-2v-3H6v3z" fill="#3f9be0"/></svg></button>
    <button class="run" aria-label="Outlook"><svg viewBox="0 0 16 16"><path d="M5 1h10v9H5z" fill="#2d94df"/><path d="M5 8l6 4 5-4v7H5z" fill="#50b5f0"/><path d="M0 4h9v9H0z" fill="#0c68b7"/><circle cx="4.500" cy="8.500" r="2" stroke="#fff" stroke-width="1.300" fill="none"/></svg></button>
    <button class="run" aria-label="Teams"><svg viewBox="0 0 16 16"><circle cx="10" cy="3" r="2.500" fill="#7b83eb"/><path d="M6 6h9v6c-2 4-8 4-9 0z" fill="#5059c9"/><path d="M0 4h9v9H0z" fill="#4650b8"/><path d="M2 6.500h5M4.500 6.500V11" stroke="#fff" stroke-width="1.300"/><circle cx="13" cy="13" r="3" fill="#92c353"/></svg></button>
    <button class="run" aria-label="Excel"><svg viewBox="0 0 16 16"><path d="M5 1h11v14H5z" fill="#21a366"/><path d="M10 8h6v7h-6z" fill="#107c41"/><path d="M0 4h9v9H0z" fill="#0b6a37"/><path d="M2.500 6l4 5M6.500 6l-4 5" stroke="#fff" stroke-width="1.300"/></svg></button>
    <button class="run" aria-label="OneNote"><svg viewBox="0 0 16 16"><path d="M5 1h11v14H5z" fill="#ca64ea"/><path d="M12 1h4v14h-4z" fill="#ae4bd5"/><path d="M0 4h9v9H0z" fill="#7719aa"/><path d="M2.500 11V6.500l4 4V6" stroke="#fff" stroke-width="1.200" fill="none"/></svg></button>
    <button class="run" aria-label="Chrome"><svg viewBox="0 0 16 16"><circle cx="8" cy="8" r="7.500" fill="#fbc116"/><path d="M8 8L1.500 4.200C5-1 12-1 14.500 4.500L8 4.500z" fill="#ea4335"/><path d="M1.500 4.200C-1 9 2 15 7.500 15.500l3-6z" fill="#34a853"/><circle cx="8" cy="8" r="3.600" fill="#fff"/><circle cx="8" cy="8" r="2.800" fill="#4285f4"/></svg></button>
    <button class="run" aria-label="Acrobat"><svg viewBox="0 0 16 16"><rect x="1" y="1" width="14" height="14" rx="2" fill="#c4161c"/><path d="M4 12c2-1 4-4 4-8 0 3 1 5 4 6-3-1-5 0-8 2z" fill="none" stroke="#fff" stroke-width="1.200"/></svg></button>
    <button class="run act" aria-label="Solid Edge"><svg><use href="#i-app"/></svg></button>
    <button class="run" aria-label="Settings"><svg viewBox="-1 -1 18 18"><use href="#i-gear" width="16" height="16"/></svg></button>
  </div>
  <div class="tray">
    <svg viewBox="0 0 12 12"><path d="M2 8l4-4 4 4" fill="none" stroke="#fff"/></svg>
    <svg viewBox="0 0 12 12"><path d="M2 3h9v6H2z" fill="#ddd"/><path d="M0 4h4v3H0z" fill="#fff"/></svg>
    <svg viewBox="0 0 12 12"><path d="M3 2h8v6H3zM5 10.500h5M1 3v7h3" fill="none" stroke="#eee"/></svg>
    <svg viewBox="0 0 12 12"><path d="M1 4.500h2L6 2v8L3 7.500H1zM8 4.500l3 3M11 4.500l-3 3" fill="none" stroke="#eee"/></svg>
    <span>ENG</span>
    <time>15:56<br>23-4-2021</time>
    <svg class="note" viewBox="0 0 18 18"><path d="M1 1h12v10H6l-3 3v-3H1z" fill="#fff"/><path d="M3 4h8M3 7h8" stroke="#777"/><circle cx="12" cy="12" r="5.500" fill="#333" stroke="#888"/><text x="12" y="15" font-size="8" text-anchor="middle" fill="#fff">7</text></svg>
  </div>
</footer>

<div class="brand">
  <svg viewBox="1076 20 156 66">
    <g fill="none" stroke="#dc4e22" stroke-width="4.500" stroke-linejoin="round"><circle cx="1111" cy="36" r="10.500"/><circle cx="1112" cy="60" r="6.500"/><circle cx="1084.500" cy="67" r="4.800"/><circle cx="1114" cy="78" r="4.300"/><path d="M1100 38c0 9-5 17-13 24M1089 69c9-1 15 2 22 8M1114.500 66v8"/></g>
    <text x="1130" y="58" class="b1">TANIS</text><text x="1136" y="76" class="b2">Confectionery</text>
  </svg>
</div>
<div class="caption">Samengestelde blokken of onderdelen<br>zoals leidingen, kleppen en symbolen<br>sleep je eenvoudig naar je ontwerp.</div>
</body>
</html>
```
FILE: styles.css
```css
* { box-sizing: border-box; }
body { margin: 0; height: 100vh; display: flex; flex-direction: column; overflow: hidden; position: relative; background: #f0f0f0; border-top: 1px solid #888; font: 8px/12px Roboto, "Open Sans", sans-serif; color: #444; }
button, input, select { font: inherit; color: inherit; margin: 0; padding: 0; border: 0; background: none; }
button { flex: none; white-space: nowrap; }
h1, h2, p, ul { margin: 0; padding: 0; font: inherit; list-style: none; }
i { font-style: normal; }
.defs { position: absolute; width: 0; height: 0; }
.ic10 { width: 11px; height: 11px; flex: none; }

.titlebar { display: flex; align-items: center; height: 14px; padding-left: 2px; gap: 3px; background: #fff; flex: none; }
.titlebar h1 { flex: 1; }
.winbtns { display: flex; }
.winbtns button { width: 30px; height: 12px; }
.winbtns svg { width: 8px; height: 8px; }
.menubar { display: flex; align-items: center; height: 14px; padding-left: 5px; background: #fff; flex: none; gap: 9px; }
.menubar .ic10 + .ic10, .menubar .ic10 + button { margin-left: -5px; }
.mdi { display: flex; margin-left: auto; }
.mdi button { width: 13px; height: 13px; border: 1px solid #f0f0f0; }
.mdi svg { width: 6px; height: 6px; display: block; margin: auto; }

.toolbars { flex: none; height: 48px; border-top: 1px solid #bbb; border-bottom: 1px solid #ccc; background: #efefef; display: flex; flex-direction: column; align-items: flex-start; }
.toolbar { display: flex; align-items: center; height: 23px; border-right: 1px solid #bbb; border-bottom: 1px solid #ccc; }
.toolbar svg { width: 16px; height: 16px; display: block; margin: auto; }
.toolbar button { width: 20px; height: 20px; }
.toolbar button.on, .strip .on { background: #bfdcf2; }
.toolbar button.wide { width: 31px; display: flex; align-items: center; }
.grip { width: 3px; height: 17px; margin: 0 2px 0 4px; border-left: 2px dotted #bbb; }
.grp { display: flex; justify-content: space-between; align-items: center; flex: none; }
.w28 { width: 28px; } .w42 { width: 42px; } .w62 { width: 62px; } .w83 { width: 83px; } .w103 { width: 103px; } .w124 { width: 124px; } .w143 { width: 143px; }
.sep { width: 1px; height: 17px; background: #aaa; margin: 0 3px 0 2px; flex: none; }
.caret { width: 0; height: 0; margin: 0 2px; border: 2px solid transparent; border-top: 3px solid #222; border-bottom: 0; flex: none; }
.toolbar label { padding: 0 2px 0 0; font-size: 9px; }
.combo { position: relative; height: 17px; margin-right: 1px; border: 1px solid #aaa; background: #fff; flex: none; }
.combo select { appearance: none; display: block; width: 100%; height: 100%; font-size: 9px; padding-left: 2px; }
.combo::after { content: ""; position: absolute; right: 4px; top: 4px; width: 4px; height: 4px; border: solid #555; border-width: 0 1px 1px 0; transform: rotate(45deg); }
.combo.off { color: #999; border-color: #ccc; }
.w52 { width: 52px; } .w39 { width: 39px; } .w32 { width: 32px; }
.toolbar .linetype { position: absolute; left: 2px; top: 4px; width: 34px; height: 8px; }
.swatch { position: absolute; left: 1px; top: 1px; width: 19px; height: 13px; background: #00f60c; }

.palette { flex: none; display: flex; height: 34px; background: #fff; border-bottom: 1px solid #777; }
.pgrip { width: 10px; flex: none; padding: 2px; background: radial-gradient(#bbb 30%, transparent 35%) 2px 10px / 3px 3px #f2f2f2; }
.pgrip svg { width: 6px; height: 6px; display: block; }
.palette .pgrip { background: #f2f2f2; border-right: 1px dotted #aaa; }
.cells { flex: 1; display: grid; grid-auto-flow: column; grid-auto-columns: 2.57%; overflow: hidden; }
.cells > * { border-right: 1px solid #eee; position: relative; overflow: hidden; }
.c svg { display: block; width: 33px; height: 32px; }
.c::after { content: ""; position: absolute; right: 0; bottom: 0; border: 3px solid #a9b97b; border-left-color: transparent; border-top-color: transparent; }
.first::before { content: ""; position: absolute; left: 1px; top: 1px; border: 2px solid #3d5230; border-right-color: transparent; border-bottom-color: transparent; }
.c span { position: absolute; left: 0; right: 0; bottom: 1px; font: 7px/10px "Liberation Sans", sans-serif; color: #2d9a35; text-align: center; }
.blue { color: #2020dd; } .orange { color: #f08010; } .magenta { color: #d010e0; } .grey { color: #777; } .green { color: #10dc30; } .red { color: #dc1020; } .darkred { color: #a00c14; } .black { color: #111; }
.dotted { stroke-dasharray: 1 2; }
.abc { font: 11px/10px Roboto, sans-serif; color: #8d8ddc; }
.strong { color: #111; font-weight: 500; }
.ptabs { flex: none; display: flex; height: 14px; padding-left: 14px; background: #f7f7f7; border-bottom: 1px solid #ccc; font: 7px/9px "Liberation Sans", sans-serif; align-items: flex-start; color: #333; }
.ptabs button { height: 10px; padding: 0 5px 0 6px; border-bottom: 1px solid #999; position: relative; }
.ptabs button::after, .ptabs .sel::before { content: ""; position: absolute; top: 0; right: 0; height: 10px; border-right: 1px solid #888; transform: skewX(-25deg); }
.ptabs .sel::before { right: auto; left: 1px; transform: skewX(25deg); }
.ptabs .sel { color: #000; background: #fff; font-weight: 700; }

.work { flex: 1; min-height: 0; display: flex; }
.strip { width: 27px; flex: none; display: flex; flex-direction: column; align-items: center; padding-top: 4px; border-left: 1px solid #666; border-right: 1px solid #bbb; }
.strip button { width: 20px; height: 19px; margin: 0 0 4px 2px; }
.strip svg { width: 16px; height: 16px; display: block; margin: auto; }
.strip .rectime { align-self: stretch; height: 16px; background: #000; color: #fff; font: 700 9px/16px "DejaVu Sans Mono", monospace; text-align: center; }
.rec { align-self: stretch; height: 25px; margin-top: 6px; background: #1c1c1c; display: flex; align-items: center; justify-content: center; }
.rec i { width: 12px; height: 12px; background: #f9602c; border-radius: 2px; }
.strip .mag { margin-top: 28px; }
.strip ul { margin-top: auto; align-self: stretch; margin-bottom: 2px; font-size: 9px; }
.strip li { height: 12px; padding-left: 1px; border-top: 1px solid #ccc; white-space: nowrap; line-height: 11px; }

.explorer { width: 256px; flex: none; display: flex; flex-direction: column; padding-left: 1px; border-right: 1px solid #ccc; }
.dockbar { display: flex; height: 11px; align-items: center; }
.dockbar i { flex: 1; height: 6px; margin: 0 2px; background: radial-gradient(#bbb 30%, transparent 35%) 0 0 / 3px 3px; }
.dockbar button { width: 9px; }
.dockbar svg { width: 6px; height: 6px; display: block; }
.links { border: 1px solid #aaa; border-right: 0; border-bottom: 0; }
.links button { display: flex; width: 100%; height: 16px; align-items: center; gap: 1px; padding-left: 4px; border-bottom: 1px solid #ddd; }
.links svg { width: 10px; height: 10px; }
.etabs { display: flex; height: 15px; align-items: flex-end; padding-left: 2px; }
.etabs button { height: 12px; padding: 0 3px; border: 1px solid #ddd; border-bottom: 0; line-height: 11px; }
.etabs .sel { height: 14px; background: #fff; padding: 0 5px; }
.treebox { flex: 1; min-height: 0; display: flex; margin: 1px 3px 5px 3px; border: 1px solid #999; background: #fff; padding: 0 1px; }
.tree { flex: 1; overflow: hidden; }
.tree li { display: flex; align-items: center; height: 16px; gap: 3px; white-space: nowrap; }
.tree svg { width: 11px; height: 11px; flex: none; }
.l0 { padding-left: 13px; } .l1 { padding-left: 26px; } .l2 { padding-left: 39px; } .l3 { padding-left: 52px; } .l4 { padding-left: 64px; }
.tree .sel { background: #d9d9d9; }
.scroll { width: 10px; background: #f0f0f0; display: flex; flex-direction: column; flex: none; }
.scroll i { flex: 0 0 75%; background: #cdcdcd; }
.scroll svg { width: 10px; height: 10px; }
.scroll svg:last-child { margin-top: auto; }
.preview { height: 82px; flex: none; display: flex; border: 1px solid #aaa; border-left: 0; margin-bottom: 2px; }
.mini { width: 115px; height: 80px; flex: none; }

.center { flex: 1; min-width: 0; display: flex; flex-direction: column; background: #fff; margin-left: 2px; }
.sheetrow { flex: 1; min-height: 0; display: flex; border-bottom: 1px solid #bbb; }
.sheet { flex: 1; min-width: 0; height: 100%; overflow: hidden; border-right: 1px solid #bbb; font-family: "Liberation Sans", sans-serif; }
.cad { font: 12px "Liberation Sans", sans-serif; fill: #444; }
.cad10 { font: 10px "Liberation Sans", sans-serif; fill: #444; }
.motor { font: 100 28px "Noto Sans CJK SC", sans-serif; fill: #555; }
.vtabs { width: 21px; flex: none; padding-top: 4px; }
.vtabs button { display: block; width: 16px; writing-mode: vertical-rl; height: 53px; border: 1px solid #ccc; border-left: 0; border-radius: 0 4px 4px 0; background: #f4f4f4; line-height: 14px; margin: 0; color: #666; }
.vtabs .sm { height: 20px; writing-mode: horizontal-tb; }
.vtabs svg { width: 8px; height: 8px; display: block; margin: auto; }
.vtabs .sel { background: #fff; font-weight: 700; color: #111; border-color: #999; height: 48px; margin-bottom: 1px; }
.sheets { height: 18px; flex: none; display: flex; align-items: flex-start; padding-left: 2px; }
.sheets button { height: 15px; padding: 0 3px 0 4px; color: #666; background: #f4f4f4; border: solid #ccc; border-width: 0 1px 1px 0; display: flex; align-items: center; gap: 2px; }
.sheets svg { width: 9px; height: 9px; margin-left: 3px; }
.sheets .nav { background: none; border: 0; padding: 0 2px; }
.sheets .nav svg { margin: 0; }
.sheets > .caret { margin-top: 7px; }
.sheets .sel { font-weight: 700; color: #111; background: #fff; border-color: #999; }

.comp { width: 182px; flex: none; display: flex; flex-direction: column; border-left: 1px solid #ddd; border-bottom: 1px solid #999; margin-bottom: 2px; }
.comptitle { display: flex; align-items: center; justify-content: space-between; height: 16px; background: #fff; padding-left: 4px; font-size: 9px; border-bottom: 1px solid #ddd; }
.comptitle button { width: 19px; height: 14px; background: #e1e1e1; border: 1px solid #bbb; line-height: 10px; }
.compbody { flex: 1; min-height: 0; display: flex; flex-direction: column; padding: 5px 4px 0 6px; }
.phead { display: flex; justify-content: space-between; align-items: center; height: 14px; flex: none; padding-left: 2px; border: 1px solid #ccc; background: #f3f3f3; }
.phead button { width: 12px; }
.phead svg { width: 10px; height: 10px; display: block; }
.crow { display: flex; align-items: center; height: 23px; flex: none; padding-left: 1px; border-bottom: 1px solid #ccc; gap: 3px; }
.crow svg { width: 15px; height: 15px; display: block; margin: auto; }
.crow button { width: 18px; }
.crow .caret { margin: 0 1px; }
.crow + .crow { border: 0; }
.crow .sep { margin: 0; }
.crow select { appearance: none; height: 15px; width: 54px; padding-left: 2px; font-size: 7px; border: 1px solid #bbb; background: linear-gradient(45deg, transparent 45%, #555 45% 55%, transparent 55%) right 6px top 5px / 3px 3px no-repeat, linear-gradient(-45deg, transparent 45%, #555 45% 55%, transparent 55%) right 3px top 5px / 3px 3px no-repeat, #e4e4e4; }
.olive { color: #66803b; }
.ctable { height: 198px; flex: none; margin-top: 2px; border: 1px solid #888; background: #fff; }
table { width: 100%; border-collapse: collapse; table-layout: fixed; }
th, td { font-weight: 400; text-align: left; padding: 0; }
.ctable th { height: 19px; padding-left: 4px; border-right: 1px solid #eee; }
.ctable .k { width: 18px; padding-left: 5px; border: 0; }
.ctable .n { width: 29px; }
.ctable .a { width: 40px; }
.ctable th svg { width: 10px; height: 10px; display: block; }
.ctable p { text-align: center; line-height: 15px; margin-top: 70px; color: #222; }
.ctable p svg { width: 8px; height: 8px; vertical-align: -1px; margin-right: 4px; }
.sy { margin-top: 6px; }
.stable { background: #fff; }
.stable th { height: 17px; border-right: 1px solid #ccc; border-bottom: 1px solid #ccc; padding-left: 2px; background: #fafafa; }
.stable th:first-child { width: 82px; }
.stable th:last-child { width: 6px; }
.stable td { height: 76px; vertical-align: top; padding-left: 14px; font-weight: 700; color: #222; }
.low { height: 16px; }
.blank { flex: 1; background: #fff; border-bottom: 1px solid #999; }
.cfoot { height: 38px; flex: none; display: flex; align-items: center; gap: 4px; padding: 11px 0 0 2px; }
.cfoot button { width: 17px; }
.cfoot svg { width: 15px; height: 15px; display: block; margin: auto; }
.cfoot .sep { margin: 0; }
.cfoot .fn { margin-left: 16px; }

.status { flex: none; display: flex; height: 12px; line-height: 11px; background: #f0f0f0; border-top: 1px solid #ddd; }
.status .pos { width: 120px; padding-left: 2px; border-right: 1px solid #ddd; }
.status .layer { width: 221px; padding-left: 3px; }
.status .hint { flex: 1; display: flex; align-items: center; gap: 3px; padding: 0 8px 0 2px; background: #cde48d; }
.hint svg { width: 9px; height: 9px; }
.hint svg:first-of-type { margin-left: auto; }

.taskbar { flex: none; display: flex; height: 26px; background: #1f1e1c; color: #fff; align-items: stretch; }
.start { width: 33px; }
.start svg { width: 12px; height: 12px; display: block; margin: auto; }
.search { width: 229px; display: flex; align-items: center; gap: 7px; padding-left: 7px; background: #f1f1f1; color: #444; }
.search svg { width: 12px; height: 12px; }
.search input { flex: 1; min-width: 0; font: 10px Roboto, sans-serif; }
.search input::placeholder { color: #555; opacity: 1; }
.apps { width: 392px; display: grid; grid-template-columns: repeat(12, 1fr); }
.apps svg { width: 16px; height: 16px; display: block; margin: auto; }
.apps button { margin: 0 3px; border-bottom: 1px solid transparent; }
.apps .run { border-color: #7fb98f; }
.apps .act { margin: 0; background: #4c4c4c; }
.tray { margin-left: auto; display: flex; align-items: center; gap: 4px; padding-right: 10px; line-height: 11px; }
.tray svg { width: 12px; height: 12px; }
.tray time { width: 42px; text-align: center; margin-left: 3px; }
.tray .note { width: 18px; height: 18px; margin-left: 4px; }

.brand { position: absolute; right: 48px; top: 19px; width: 156px; height: 66px; }
.brand svg { width: 156px; height: 66px; display: block; overflow: visible; }
.b1 { font: 700 35px "Noto Sans CJK SC", sans-serif; fill: #4d4d4f; stroke: #4d4d4f; stroke-linejoin: round; }
.b2 { font: 300 15px "Noto Sans CJK SC", sans-serif; fill: #8c8c8c; }
.caption { position: absolute; right: 10px; bottom: 79px; width: 507px; height: 127px; padding-top: 10px; background: #d11a86; color: #fff; font: 500 25px/34px "Noto Sans CJK SC", sans-serif; text-align: center; }
```
